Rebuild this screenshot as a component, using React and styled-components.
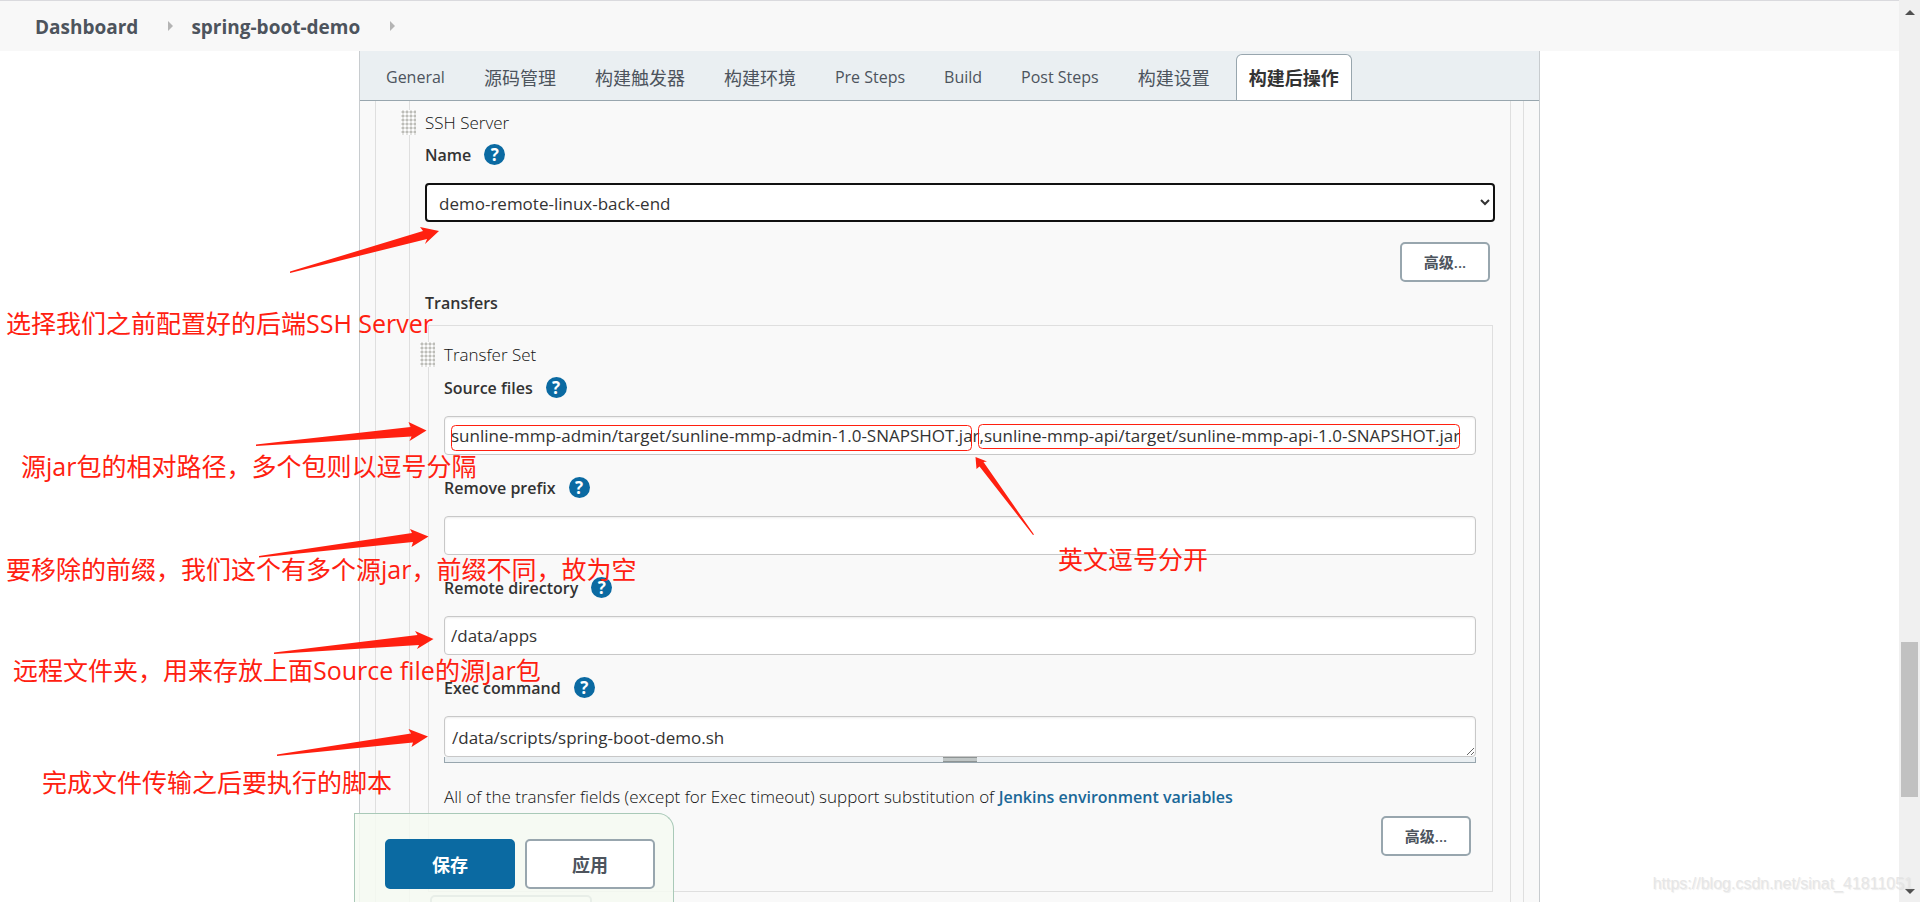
import React from 'react'
import styled, { createGlobalStyle } from 'styled-components'

const GlobalStyle = createGlobalStyle`
  *, *::before, *::after {
    box-sizing: border-box;
  }
  body {
    margin: 0;
    background: #fff;
    color: #333;
    font-family: "Open Sans", "Noto Sans CJK SC", sans-serif;
    font-size: 17px;
    line-height: 25px;
  }
  button, input, select, textarea {
    font-family: inherit;
    margin: 0;
  }
`

const Screen = styled.div`
  position: relative;
  display: flex;
  height: 100vh;
  overflow: hidden;
`
const Page = styled.div`
  flex: 1;
  min-width: 0;
  display: flex;
  flex-direction: column;
`

/* breadcrumb */
const Breadcrumbs = styled.nav`
  display: flex;
  align-items: center;
  gap: 26px;
  height: 51px;
  flex: none;
  padding: 2px 35px 0;
  border-top: 1px solid #dadade;
  background: #f8f8f8;
`
const Crumb = styled.a`
  color: #4d545d;
  font-size: 19px;
  font-weight: 700;
  text-decoration: none;
`
const CrumbArrow = styled.i`
  border: 5px solid transparent;
  border-left-color: #b4b4b4;
  border-right: 0;
  margin: 0 -8px 3px 4px;
`

/* config panel */
const Panel = styled.main`
  position: relative;
  flex: 1;
  min-height: 0;
  width: 100%;
  max-width: 1181px;
  margin: 0 auto;
  display: flex;
  flex-direction: column;
  border: solid #c8cccf;
  border-width: 0 1px;
  background: #f9f9f9;
`
const TabBar = styled.div`
  display: flex;
  align-items: stretch;
  gap: 13px;
  flex: none;
  height: 50px;
  padding: 3px 13px 0;
  background: #eaeff2;
  border-bottom: 1px solid #98a6ae;
`
const Tab = styled.button`
  padding: 0 12px 2px;
  border: 1px solid ${p => (p.$active ? '#98a6ae' : 'transparent')};
  border-bottom: 0;
  border-radius: 6px 6px 0 0;
  background: ${p => (p.$active ? '#fff' : 'transparent')};
  color: ${p => (p.$active ? '#333' : '#4d545d')};
  font-size: ${p => (p.$latin ? '16px' : '18px')};
  font-weight: ${p => (p.$active ? 700 : 400)};
  white-space: nowrap;
`
const Scroller = styled.div`
  flex: 1;
  min-height: 0;
  overflow: hidden;
  padding: 0 15px;
`
const Outer = styled.div`
  padding: 0 12px 0 33px;
  border: solid #dfdfdf;
  border-width: 0 1px;
`
const Chunk = styled.section`
  padding: 9px 15px 0;
  border: solid #dfdfdf;
  border-width: 0 1px;
`
const TransferChunk = styled.section`
  margin: 9px 2px 0 3px;
  padding: 16px 16px 35px 15px;
  border: 1px solid #dfdfdf;
`
const ChunkTitle = styled.div`
  position: relative;
  margin-bottom: ${p => p.$gap || '8px'};
  color: #111;
  font-weight: 300;
`
const Handle = styled.span`
  position: absolute;
  left: -24px;
  top: 0;
  width: 15px;
  height: 25px;
  background:
    radial-gradient(circle at 2px 2px, #bdbdb8 1px, transparent 2px) 0 0 / 4px 4px,
    #fdfdfd;
`
const LabelRow = styled.div`
  display: flex;
  align-items: center;
  gap: 13px;
  margin-bottom: 15px;
`
const Label = styled.label`
  font-size: 16px;
  font-weight: 600;
`
const Help = styled.button`
  width: 21px;
  height: 21px;
  padding: 0;
  margin-bottom: 3px;
  border: 0;
  border-radius: 50%;
  background: #0b6aa2;
  color: #fff;
  font-size: 17px;
  font-weight: 700;
  line-height: 21px;
`
const Select = styled.select`
  display: block;
  width: 100%;
  height: 39px;
  padding: 2px 0 0 8px;
  border: 2px solid #111;
  border-radius: 4px;
  background: #fff;
  color: #333;
  font-size: 17px;
`
const Field = styled.div`
  margin-bottom: 21px;
`
const TextInput = styled.input`
  display: block;
  width: 100%;
  height: 39px;
  padding: 0 6px;
  border: 1px solid #c8c8c8;
  border-radius: 4px;
  background: #fff;
  box-shadow: inset 0 1px 2px rgba(0, 0, 0, 0.08);
  color: #333;
  font-size: 17px;
`
const TextArea = styled.textarea`
  display: block;
  width: 100%;
  height: 41px;
  padding: 8px 7px;
  border: 1px solid #c8c8c8;
  border-radius: 4px;
  background: #fff;
  box-shadow: inset 0 1px 2px rgba(0, 0, 0, 0.08);
  color: #333;
  font-size: 17px;
  line-height: 25px;
  overflow: hidden;
`
const ResizeBar = styled.div`
  display: flex;
  justify-content: center;
  height: 6px;
  border: 1px solid #98a6ae;
  border-top: 0;
  background: #eaeff2;
`
const Grip = styled.span`
  width: 34px;
  height: 5px;
  border: solid #8e9494;
  border-width: 1px 0;
  background: #c0c6c6;
`
const HelpText = styled.p`
  margin: 21px 0 6px;
  color: #111;
  font-weight: 300;
`
const HelpLink = styled.a`
  color: #1a6898;
  font-size: 16px;
  font-weight: 600;
  text-decoration: none;
`
const ButtonRow = styled.div`
  display: flex;
  justify-content: flex-end;
  padding-right: 5px;
  margin-top: ${p => p.$top || '0'};
`
const AdvancedButton = styled.button`
  width: 90px;
  height: 40px;
  padding: 0 0 2px;
  border: 2px solid #98a6ae;
  border-radius: 5px;
  background: #fff;
  color: #4d545d;
  font-size: 15px;
  font-weight: 600;
`
const SubHeading = styled.div`
  margin-top: 9px;
  font-size: 16px;
  font-weight: 600;
`
const AddButton = styled.button`
  display: block;
  width: 162px;
  height: 40px;
  margin: 3px 0 0 5px;
  border: 2px solid #98a6ae;
  border-radius: 5px;
  background: #fff;
`

/* sticky save bar */
const SaveBar = styled.div`
  position: absolute;
  left: -6px;
  bottom: 0;
  display: flex;
  gap: 10px;
  padding: 25px 18px 13px 30px;
  border: 1px solid #a9c9b8;
  border-bottom: 0;
  border-radius: 0 16px 0 0;
  background: rgba(246, 250, 242, 0.85);
`
const BarButton = styled.button`
  width: 130px;
  height: 50px;
  border: 2px solid ${p => (p.$primary ? '#0b6aa2' : '#98a6ae')};
  border-radius: 5px;
  background: ${p => (p.$primary ? '#0b6aa2' : '#fff')};
  color: ${p => (p.$primary ? '#fff' : '#4d545d')};
  font-size: 18px;
  font-weight: 700;
`

/* page scrollbar */
const ScrollTrack = styled.div`
  flex: none;
  display: flex;
  flex-direction: column;
  align-items: center;
  width: 21px;
  padding: 10px 0 8px;
  background: #f0f0f0;
`
const ScrollArrow = styled.i`
  border: 5px solid transparent;
  ${p => (p.$up ? 'border-bottom-color: #505050; border-top: 0;' : 'border-top-color: #505050; border-bottom: 0;')}
`
const ScrollSpace = styled.div`
  flex: ${p => p.$size};
`
const ScrollThumb = styled.div`
  flex: 155;
  width: 17px;
  background: #c1c1c1;
`

/* notes written over the page */
const Overlay = styled.div`
  position: absolute;
  inset: 0;
  pointer-events: none;
`
const Note = styled.span`
  position: absolute;
  left: ${p => p.$x}px;
  top: ${p => p.$y}px;
  color: #ff2010;
  font-size: 25px;
  line-height: 30px;
  white-space: nowrap;
`
const Drawing = styled.svg`
  position: absolute;
  left: 0;
  top: 0;
  overflow: visible;
`
const Watermark = styled.span`
  position: absolute;
  right: 7px;
  bottom: 6px;
  color: #e6e6e6;
  font-family: "Liberation Sans", sans-serif;
  font-size: 16px;
  text-shadow: 1px 1px 1px rgba(160, 160, 160, 0.2);
`

const tabs = [
  { text: 'General', latin: true },
  { text: '源码管理' },
  { text: '构建触发器' },
  { text: '构建环境' },
  { text: 'Pre Steps', latin: true },
  { text: 'Build', latin: true },
  { text: 'Post Steps', latin: true },
  { text: '构建设置' },
  { text: '构建后操作', active: true },
]

const fields = [
  {
    id: 'source',
    label: 'Source files',
    value: 'sunline-mmp-admin/target/sunline-mmp-admin-1.0-SNAPSHOT.jar,sunline-mmp-api/target/sunline-mmp-api-1.0-SNAPSHOT.jar',
  },
  { id: 'prefix', label: 'Remove prefix', value: '' },
  { id: 'remote', label: 'Remote directory', value: '/data/apps' },
]

const notes = [
  { x: 6, y: 308, text: '选择我们之前配置好的后端SSH Server' },
  { x: 21, y: 451, text: '源jar包的相对路径，多个包则以逗号分隔' },
  { x: 6, y: 554, text: '要移除的前缀，我们这个有多个源jar，前缀不同，故为空' },
  { x: 13, y: 655, text: '远程文件夹，用来存放上面Source file的源Jar包' },
  { x: 42, y: 767, text: '完成文件传输之后要执行的脚本' },
  { x: 1058, y: 544, text: '英文逗号分开' },
]

const arrows = [
  '290,271.5 423,231 420,227 439,231 425,244 427,239 290,273',
  '256,444.5 410.5,427 408.5,422 426.5,430.5 409.5,441 411.5,436.5 256,446',
  '259,556 412,533 410,529 428.5,536.5 411.5,547 413,542 259,557.5',
  '274,652.5 417.5,635 415,631 433.5,639 417,649 419,645 274,654',
  '277,754.5 411,733.5 408.5,729 428,736.5 411.5,747 413,742.5 277,756',
  '1033,535 979.5,466.5 976.5,469 975.5,457 987,461.5 983.5,462 1034,534.5',
]

const FieldLabel = ({ id, text }) => (
  <LabelRow>
    <Label htmlFor={id}>{text}</Label>
    <Help type="button" aria-label={`Help for ${text}`}>?</Help>
  </LabelRow>
)

const Annotations = () => (
  <Overlay>
    <Drawing width="1" height="1">
      {arrows.map(points => <polygon key={points} points={points} fill="#ff2010" />)}
      <rect x="451.5" y="425.5" width="520" height="25" rx="4" fill="none" stroke="#ff2010" />
      <rect x="978.5" y="424.5" width="481" height="24" rx="4" fill="none" stroke="#ff2010" />
    </Drawing>
    {notes.map(n => <Note key={n.text} $x={n.x} $y={n.y}>{n.text}</Note>)}
    <Watermark>https://blog.csdn.net/sinat_41811051</Watermark>
  </Overlay>
)

const App = () => {
  return (
    <Screen>
      <GlobalStyle />
      <Page>
        <Breadcrumbs>
          <Crumb href="#">Dashboard</Crumb>
          <CrumbArrow />
          <Crumb href="#">spring-boot-demo</Crumb>
          <CrumbArrow />
        </Breadcrumbs>
        <Panel>
          <TabBar>
            {tabs.map(t => (
              <Tab key={t.text} type="button" $latin={t.latin} $active={t.active}>{t.text}</Tab>
            ))}
          </TabBar>
          <Scroller>
            <Outer>
              <Chunk>
                <ChunkTitle><Handle />SSH Server</ChunkTitle>
                <FieldLabel id="server" text="Name" />
                <Select id="server" defaultValue="demo-remote-linux-back-end">
                  <option>demo-remote-linux-back-end</option>
                </Select>
                <ButtonRow $top="20px"><AdvancedButton type="button">高级...</AdvancedButton></ButtonRow>
                <SubHeading>Transfers</SubHeading>
                <TransferChunk>
                  <ChunkTitle $gap="9px"><Handle />Transfer Set</ChunkTitle>
                  {fields.map(f => (
                    <Field key={f.id}>
                      <FieldLabel id={f.id} text={f.label} />
                      <TextInput id={f.id} type="text" defaultValue={f.value} />
                    </Field>
                  ))}
                  <FieldLabel id="exec" text="Exec command" />
                  <TextArea id="exec" rows="1" defaultValue="/data/scripts/spring-boot-demo.sh" />
                  <ResizeBar><Grip /></ResizeBar>
                  <HelpText>
                    All of the transfer fields (except for Exec timeout) support substitution of{' '}
                    <HelpLink href="#">Jenkins environment variables</HelpLink>
                  </HelpText>
                  <ButtonRow><AdvancedButton type="button">高级...</AdvancedButton></ButtonRow>
                </TransferChunk>
                <AddButton type="button" aria-label="Add Transfer Set" />
              </Chunk>
            </Outer>
          </Scroller>
          <SaveBar>
            <BarButton type="button" $primary>保存</BarButton>
            <BarButton type="button">应用</BarButton>
          </SaveBar>
        </Panel>
      </Page>
      <ScrollTrack>
        <ScrollArrow $up />
        <ScrollSpace $size={627} />
        <ScrollThumb />
        <ScrollSpace $size={92} />
        <ScrollArrow />
      </ScrollTrack>
      <Annotations />
    </Screen>
  )
}

export default App
